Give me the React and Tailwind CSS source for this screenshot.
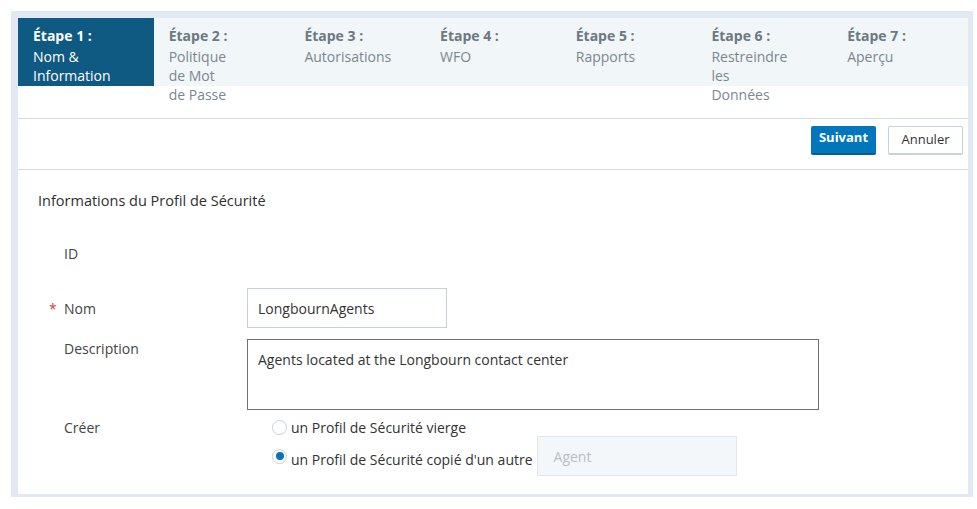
import { useState } from 'react'

const STEPS = [
  { n: 1, lines: ['Nom &', 'Information'] },
  { n: 2, lines: ['Politique', 'de Mot', 'de Passe'] },
  { n: 3, lines: ['Autorisations'] },
  { n: 4, lines: ['WFO'] },
  { n: 5, lines: ['Rapports'] },
  { n: 6, lines: ['Restreindre', 'les', 'Données'] },
  { n: 7, lines: ['Aperçu'] },
]

function Radio({ checked, onClick }) {
  return (
    <span onClick={onClick}
      className="w-[15px] h-[15px] rounded-full border border-[#c9d0d6] bg-white flex items-center justify-center shrink-0 cursor-pointer">
      {checked && <span className="w-[8px] h-[8px] rounded-full bg-[#0a74b8]"/>}
    </span>
  )
}

export default function App() {
  const [mode, setMode] = useState('copy')

  return (
    <div className="w-[977px] h-[509px] bg-white pt-[11px] pl-[11px] text-[14px] leading-[19px] text-[#333]"
      style={{ fontFamily: '"Open Sans", "Noto Sans", sans-serif' }}>
      <div className="w-[962px] h-[486px] border-[#e1e9f2] border-l-[7px] border-t-[7px] border-r-[5px] border-b-[3px] bg-white flex flex-col">

        <div className="h-[101px] border-b border-[#d5dbe0]">
          <div className="h-[68px] bg-[#f1f6f9] flex">
            {STEPS.map(s => (
              <div key={s.n}
                className={`w-[135.7px] h-[68px] pl-[15px] pt-[8px] ${s.n === 1 ? 'bg-[#0e5a82] text-white' : 'text-[#7b8790]'}`}>
                <div className={`font-bold mb-[2px] ${s.n === 1 ? 'text-white' : 'text-[#6c7882]'}`}>Étape {s.n} :</div>
                {s.lines.map(l => <div key={l} className="whitespace-nowrap">{l}</div>)}
              </div>
            ))}
          </div>
        </div>

        <div className="h-[51px] border-b border-[#d5dbe0] flex items-start justify-end gap-[12px] pr-[5px] pt-[7px]">
          <button className="w-[65px] h-[29px] bg-[#0077bd] border-b-2 border-[#0b5c8f] rounded-[2px] text-white font-bold text-[13px] leading-[20px] pb-[6px]">
            Suivant
          </button>
          <button className="w-[75px] h-[29px] bg-white border border-[#c8d2da] border-b-2 rounded-[2px] text-[#333] text-[13px] leading-[20px] pb-[2px]">
            Annuler
          </button>
        </div>

        <div className="pl-[20px]">
          <div className="mt-[21px] font-medium text-[14.5px] text-[#2f2f2f]">Informations du Profil de Sécurité</div>

          <div className="mt-[34px] flex">
            <div className="w-[209px] pl-[26px] text-[#444]">ID</div>
          </div>

          <div className="mt-[25px] flex items-center">
            <div className="w-[209px] flex text-[#444]">
              <span className="w-[26px] pl-[11px] text-[#e0354a]">*</span>
              <span>Nom</span>
            </div>
            <div className="w-[200px] h-[40px] border border-[#c7d0d6] px-[10px] flex items-center text-[#333]">LongbournAgents</div>
          </div>

          <div className="mt-[11px] flex items-start">
            <div className="w-[209px] pl-[26px] text-[#444]">Description</div>
            <div className="w-[572px] h-[71px] border border-[#707070] px-[10px] pt-[10px] text-[#333]">
              Agents located at the Longbourn contact center
            </div>
          </div>

          <div className="mt-[8px] flex items-start">
            <div className="w-[209px] pl-[26px] text-[#444]">Créer</div>
            <div className="pl-[25px] flex flex-col">
              <div className="flex items-center gap-[4px] h-[18px]">
                <Radio checked={mode === 'blank'} onClick={() => setMode('blank')}/>
                <span>un Profil de Sécurité vierge</span>
              </div>
              <div className="flex items-center gap-[4px]">
                <Radio checked={mode === 'copy'} onClick={() => setMode('copy')}/>
                <span className="mt-[6px]">un Profil de Sécurité copié d'un autre</span>
                <div className="w-[200px] h-[40px] bg-[#f4f7fa] border border-[#e0e6eb] px-[16px] flex items-center text-[#b9bec3]">Agent</div>
              </div>
            </div>
          </div>
        </div>
      </div>
    </div>
  )
}
